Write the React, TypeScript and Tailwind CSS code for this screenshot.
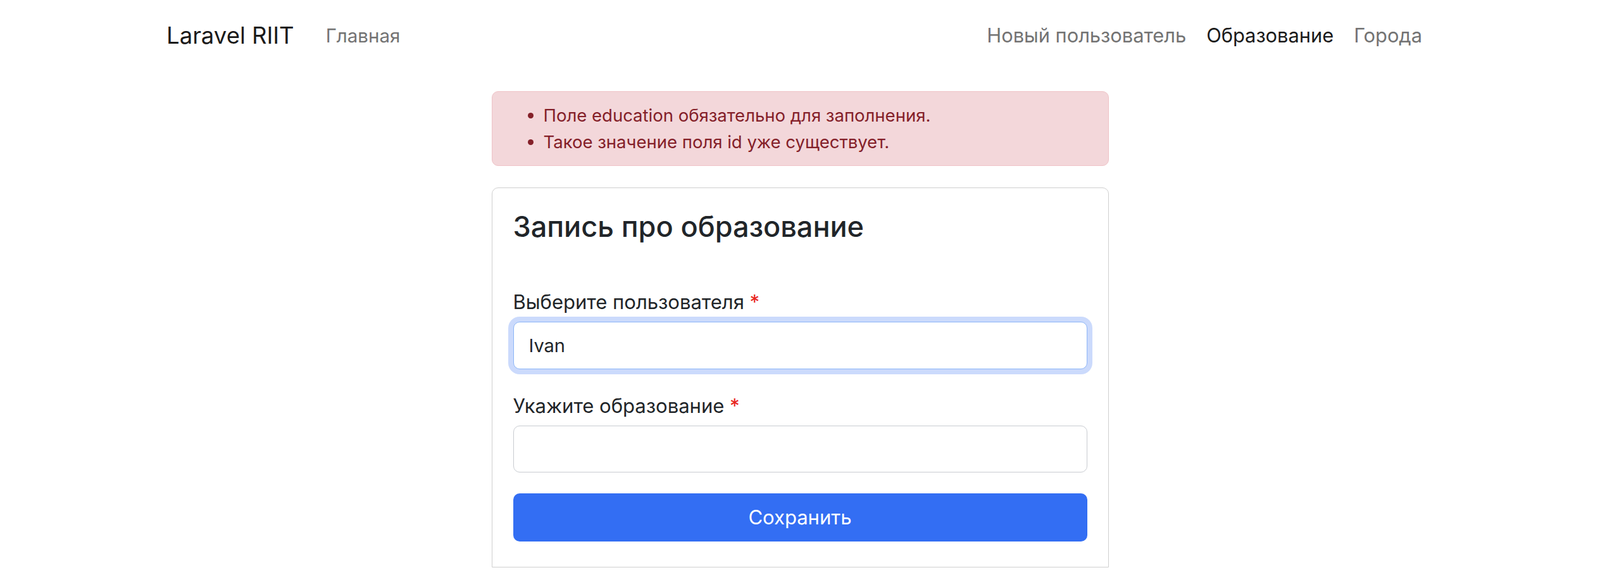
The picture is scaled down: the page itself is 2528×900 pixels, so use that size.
import { useState } from "react";

const navLinks = [
  { label: "Новый пользователь", active: false },
  { label: "Образование", active: true },
  { label: "Города", active: false },
];

const errors = [
  "Поле education обязательно для заполнения.",
  "Такое значение поля id уже существует.",
];

export default function App() {
  const [user, setUser] = useState("Ivan");
  const [education, setEducation] = useState("");

  return (
    <div className="min-h-[900px] bg-white font-['Inter','Liberation_Sans',sans-serif] text-[#212529]">
      <nav className="mx-auto flex h-[112px] w-[2002px] items-center justify-between">
        <div className="flex items-center gap-[50px]">
          <span className="text-[36.5px] leading-none text-[#1a1a1a]">Laravel RIIT</span>
          <a className="text-[29.5px] text-[#737373]" href="#">
            Главная
          </a>
        </div>
        <ul className="flex items-center">
          {navLinks.map((link) => (
            <li key={link.label} className="px-[16px] last:pr-[18px]">
              <a
                href="#"
                className={`text-[30.8px] ${link.active ? "text-[#1a1a1a]" : "text-[#737373]"}`}
              >
                {link.label}
              </a>
            </li>
          ))}
        </ul>
      </nav>

      <main className="mx-auto mt-[32px] w-[975px]">
        <div className="rounded-[10px] border border-[#efc3c7] bg-[#f3d7da] px-[27px] py-[16px] text-[27.5px] leading-[42px] text-[#842029]">
          <ul className="list-disc pl-[54px]">
            {errors.map((err) => (
              <li key={err}>{err}</li>
            ))}
          </ul>
        </div>

        <form
          onSubmit={(e) => e.preventDefault()}
          className="mt-[34px] rounded-t-[10px] border border-[#cfcfcf] px-[33px] pt-[34px] pb-[40px]"
        >
          <h3 className="text-[45px] font-medium leading-[53px]">Запись про образование</h3>

          <label className="mt-[72px] block">
            <span className="mb-[11px] block text-[31px] leading-[41px]">
              Выберите пользователя <span className="text-[#e8241c]">*</span>
            </span>
            <input
              value={user}
              onChange={(e) => setUser(e.target.value)}
              className="block h-[75px] w-full rounded-[10px] border border-[#8db5f7] bg-white px-[24px] text-[29px] text-[#212529] shadow-[0_0_0_8px_#cbdafc] outline-none"
            />
          </label>

          <label className="mt-[37px] block">
            <span className="mb-[11px] block text-[31px] leading-[41px]">
              Укажите образование <span className="text-[#e8241c]">*</span>
            </span>
            <input
              value={education}
              onChange={(e) => setEducation(e.target.value)}
              className="block h-[74px] w-full rounded-[10px] border border-[#c9ccd1] bg-white px-[24px] text-[29px] outline-none"
            />
          </label>

          <button
            type="submit"
            className="mt-[33px] block h-[76px] w-full rounded-[10px] bg-[#336ef3] text-[31px] text-white"
          >
            Сохранить
          </button>
        </form>
      </main>
    </div>
  );
}
